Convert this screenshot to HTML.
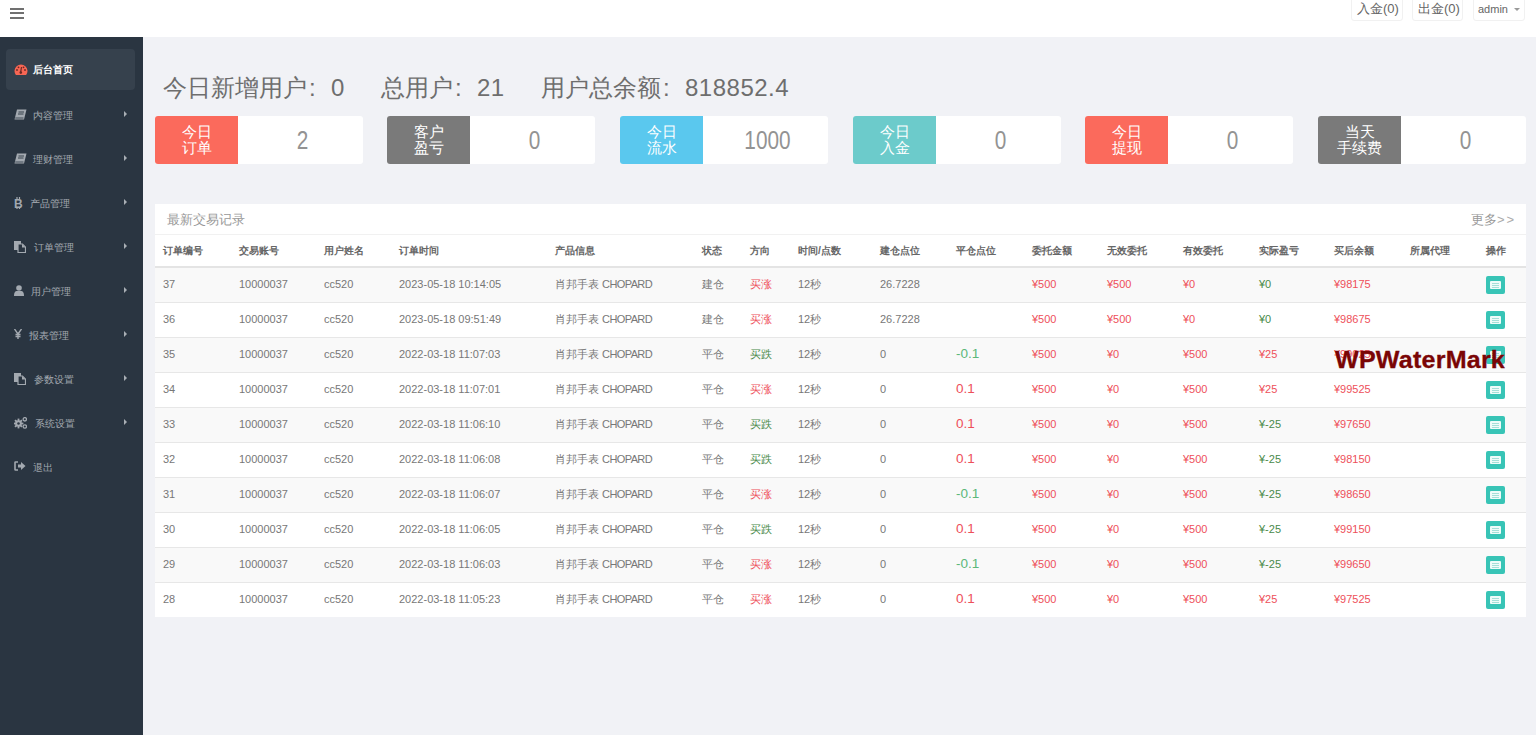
<!DOCTYPE html>
<html><head><meta charset="utf-8">
<style>
*{margin:0;padding:0;box-sizing:border-box}
html,body{width:1536px;height:735px;overflow:hidden;background:#f1f2f6;font-family:"Liberation Sans",sans-serif;position:relative}
.abs{position:absolute}
#top{position:absolute;left:0;top:0;width:1536px;height:37px;background:#fff}
#side{position:absolute;left:0;top:37px;width:143px;height:698px;background:#2a3541}
.burger{position:absolute;left:10px;width:14px;height:2px;background:#707070}
.tbtn{position:absolute;top:-3px;height:24px;border:1px solid #f1f1f1;border-radius:3px;background:#fff;color:#666;font-size:13px;line-height:22px;white-space:nowrap}
.mi{position:absolute;left:0;width:143px;height:44px;color:#9aa0a7;font-size:10px}
.mi .t{position:absolute;left:33px;top:0;line-height:44px}
.mi .ar{position:absolute;left:123px;top:19px;width:0;height:0;border-left:4px solid #9aa0a7;border-top:4px solid transparent;border-bottom:4px solid transparent}
.mi svg{position:absolute}
.title{position:absolute;top:72px;font-size:24px;color:#6e6e6e;line-height:32px;white-space:nowrap}
.col{display:inline-block;width:24px;padding-left:2px}
.dg{letter-spacing:0.5px}
.box{position:absolute;top:116px;width:208px;height:48px;background:#fff;border-radius:3px;overflow:hidden}
.box .lab{position:absolute;left:0;top:0;width:83px;height:48px;color:#fff;font-size:14.5px;line-height:16px;text-align:center;padding-top:8px}
.box .val{position:absolute;left:85px;top:0;width:125px;height:48px;text-align:center;font-size:26px;color:#939393;line-height:48px;transform:scaleX(0.8)}
#card{position:absolute;left:155px;top:204px;width:1371px;height:413px;background:#fff}
.row{position:absolute;left:0;width:1371px;height:35px;border-top:1px solid #e7e7e7}
.row.first{border-top:none}
.row.odd{background:#f9f9f9}
.c{position:absolute;top:-1px;line-height:34px;font-size:11px;color:#777;white-space:nowrap}
.h{position:absolute;top:0;line-height:32px;font-size:10.4px;color:#666;font-weight:bold;white-space:nowrap}
.r{color:#ee4f5a}
.g{color:#4a8a4a}
.gl{color:#5cb87a}
.big{font-size:13.5px}
.btn{position:absolute;left:1331px;top:8px;width:19px;height:18px;background:#38c4b6;border-radius:2px}
.btn i{position:absolute;left:4px;top:5px;width:11px;height:8px;background:#effbf9;border-radius:1px}
.btn i:before{content:"";position:absolute;left:2px;top:2px;width:7px;height:1px;background:#a5dfd8;box-shadow:0 2px 0 #a5dfd8}
.btn i:after{content:"";position:absolute;left:2px;top:6px;width:7px;height:1px;background:#a5dfd8}
#wm{position:absolute;left:1335px;top:347px;font-size:23px;font-weight:bold;color:#7a0505;letter-spacing:0.2px;white-space:nowrap;transform:scaleX(1.09);transform-origin:0 0;-webkit-text-stroke:0.3px #7a0505}
</style></head><body>
<div id="top">
  <div class="burger" style="top:8px"></div>
  <div class="burger" style="top:12px"></div>
  <div class="burger" style="top:17px"></div>
  <div class="tbtn" style="left:1351px;width:52px;padding-left:5px">入金(0)</div>
  <div class="tbtn" style="left:1412px;width:51px;padding-left:5px">出金(0)</div>
  <div class="tbtn" style="left:1473px;width:52px;padding-left:4px;font-size:11px">admin</div>
  <div class="abs" style="left:1514px;top:8px;width:0;height:0;border-top:3px solid #999;border-left:3px solid transparent;border-right:3px solid transparent"></div>
</div>
<div id="side"></div>
<div id="menu"><div class="abs" style="left:6px;top:49px;width:129px;height:41px;background:#36414d;border-radius:4px"></div><svg class="abs" style="left:14px;top:64px" width="14" height="12" viewBox="0 0 14 12"><path d="M1.88,11 A6.5,6.5 0 1 1 12.12,11 Z" fill="#f86654"/><circle cx="3" cy="6" r="0.9" fill="#6b2a24"/><circle cx="4.5" cy="3.3" r="0.9" fill="#6b2a24"/><circle cx="9.5" cy="3.3" r="0.9" fill="#6b2a24"/><circle cx="11" cy="6" r="0.9" fill="#6b2a24"/><path d="M7.5,3 L6.6,8.5" stroke="#6b2a24" stroke-width="1.2"/><circle cx="6.8" cy="8.6" r="1.3" fill="#6b2a24"/></svg><div class="abs" style="left:33px;top:62px;font-size:10px;line-height:16px;color:#fff;font-weight:bold">后台首页</div><svg class="abs" style="left:14px;top:109px" width="13" height="11" viewBox="0 0 13 11"><path d="M3,0.5 L12.5,0.5 L10,10.5 L0.5,10.5 Z" fill="#a3a9b0"/><path d="M4.5,3 L10,3 M4,5 L9.5,5" stroke="#2a3541" stroke-width="0.9"/><path d="M1.2,9 L9.5,9" stroke="#2a3541" stroke-width="0.8"/></svg><div class="abs" style="left:33px;top:108px;font-size:10px;line-height:16px;color:#a2a9b0">内容管理</div><div class="abs" style="left:124px;top:111px;width:0;height:0;border-left:3.5px solid #a9afb5;border-top:3.5px solid transparent;border-bottom:3.5px solid transparent"></div><svg class="abs" style="left:14px;top:153px" width="13" height="11" viewBox="0 0 13 11"><path d="M3,0.5 L12.5,0.5 L10,10.5 L0.5,10.5 Z" fill="#a3a9b0"/><path d="M4.5,3 L10,3 M4,5 L9.5,5" stroke="#2a3541" stroke-width="0.9"/><path d="M1.2,9 L9.5,9" stroke="#2a3541" stroke-width="0.8"/></svg><div class="abs" style="left:33px;top:152px;font-size:10px;line-height:16px;color:#a2a9b0">理财管理</div><div class="abs" style="left:124px;top:155px;width:0;height:0;border-left:3.5px solid #a9afb5;border-top:3.5px solid transparent;border-bottom:3.5px solid transparent"></div><svg class="abs" style="left:14px;top:197px" width="10" height="12" viewBox="0 0 10 12"><text x="0" y="10.5" font-family="Liberation Sans" font-weight="bold" font-size="12" fill="#a3a9b0">B</text><path d="M3,0 V2 M5.5,0 V2 M3,10 V12 M5.5,10 V12" stroke="#a3a9b0" stroke-width="1.2"/></svg><div class="abs" style="left:30px;top:196px;font-size:10px;line-height:16px;color:#a2a9b0">产品管理</div><div class="abs" style="left:124px;top:199px;width:0;height:0;border-left:3.5px solid #a9afb5;border-top:3.5px solid transparent;border-bottom:3.5px solid transparent"></div><svg class="abs" style="left:14px;top:241px" width="12" height="12" viewBox="0 0 12 12"><rect x="0" y="0" width="7" height="9" fill="#a3a9b0"/><path d="M4,3 H8.5 L11.5,6 V11.5 H4 Z" fill="#2a3541" stroke="#a3a9b0" stroke-width="1.2"/><path d="M8,3 V6.5 H11.5" fill="#a3a9b0"/></svg><div class="abs" style="left:34px;top:240px;font-size:10px;line-height:16px;color:#a2a9b0">订单管理</div><div class="abs" style="left:124px;top:243px;width:0;height:0;border-left:3.5px solid #a9afb5;border-top:3.5px solid transparent;border-bottom:3.5px solid transparent"></div><svg class="abs" style="left:14px;top:285px" width="10" height="11" viewBox="0 0 10 11"><circle cx="5" cy="3" r="2.8" fill="#a3a9b0"/><path d="M0,11 C0,7 1.5,6 3,6 L7,6 C8.5,6 10,7 10,11 Z" fill="#a3a9b0"/></svg><div class="abs" style="left:31px;top:284px;font-size:10px;line-height:16px;color:#a2a9b0">用户管理</div><div class="abs" style="left:124px;top:287px;width:0;height:0;border-left:3.5px solid #a9afb5;border-top:3.5px solid transparent;border-bottom:3.5px solid transparent"></div><svg class="abs" style="left:14px;top:329px" width="8" height="10" viewBox="0 0 8 10"><path d="M0.5,0 L4,5 L7.5,0 M4,5 V10 M1.5,5.5 H6.5 M1.5,7.5 H6.5" stroke="#a3a9b0" stroke-width="1.4" fill="none"/></svg><div class="abs" style="left:29px;top:328px;font-size:10px;line-height:16px;color:#a2a9b0">报表管理</div><div class="abs" style="left:124px;top:331px;width:0;height:0;border-left:3.5px solid #a9afb5;border-top:3.5px solid transparent;border-bottom:3.5px solid transparent"></div><svg class="abs" style="left:14px;top:373px" width="12" height="12" viewBox="0 0 12 12"><rect x="0" y="0" width="7" height="9" fill="#a3a9b0"/><path d="M4,3 H8.5 L11.5,6 V11.5 H4 Z" fill="#2a3541" stroke="#a3a9b0" stroke-width="1.2"/><path d="M8,3 V6.5 H11.5" fill="#a3a9b0"/></svg><div class="abs" style="left:34px;top:372px;font-size:10px;line-height:16px;color:#a2a9b0">参数设置</div><div class="abs" style="left:124px;top:375px;width:0;height:0;border-left:3.5px solid #a9afb5;border-top:3.5px solid transparent;border-bottom:3.5px solid transparent"></div><svg class="abs" style="left:14px;top:417px" width="13" height="12" viewBox="0 0 13 12"><g fill="#a3a9b0"><circle cx="4.5" cy="6.5" r="3.3"/><rect x="3.6" y="1.6" width="1.8" height="9.8"/><rect x="-0.4" y="5.6" width="9.8" height="1.8"/><rect x="3.6" y="1.6" width="1.8" height="9.8" transform="rotate(45 4.5 6.5)"/><rect x="3.6" y="1.6" width="1.8" height="9.8" transform="rotate(-45 4.5 6.5)"/></g><circle cx="4.5" cy="6.5" r="1.3" fill="#2a3541"/><circle cx="10.8" cy="2.3" r="1.7" fill="none" stroke="#a3a9b0" stroke-width="1.3"/><circle cx="10.8" cy="9.5" r="1.7" fill="none" stroke="#a3a9b0" stroke-width="1.3"/></svg><div class="abs" style="left:35px;top:416px;font-size:10px;line-height:16px;color:#a2a9b0">系统设置</div><div class="abs" style="left:124px;top:419px;width:0;height:0;border-left:3.5px solid #a9afb5;border-top:3.5px solid transparent;border-bottom:3.5px solid transparent"></div><svg class="abs" style="left:14px;top:461px" width="12" height="10" viewBox="0 0 12 10"><path d="M4,1 H1.5 Q1,1 1,1.5 V8.5 Q1,9 1.5,9 H4" stroke="#a3a9b0" stroke-width="1.6" fill="none"/><path d="M4,3.5 H7 V1 L11.5,5 L7,9 V6.5 H4 Z" fill="#a3a9b0"/></svg><div class="abs" style="left:33px;top:460px;font-size:10px;line-height:16px;color:#a2a9b0">退出</div></div>
<div class="title" style="left:163px">今日新增用户<span class="col">:</span><span class="dg">0</span></div>
<div class="title" style="left:381px">总用户<span class="col">:</span><span class="dg">21</span></div>
<div class="title" style="left:541px">用户总余额<span class="col">:</span><span class="dg">818852.4</span></div>

<div class="box" style="left:155px"><div class="lab" style="background:#fb6a5c">今日<br>订单</div><div class="val">2</div></div>
<div class="box" style="left:387px"><div class="lab" style="background:#7a7a7a">客户<br>盈亏</div><div class="val">0</div></div>
<div class="box" style="left:620px"><div class="lab" style="background:#5ac8ee">今日<br>流水</div><div class="val">1000</div></div>
<div class="box" style="left:853px"><div class="lab" style="background:#6ccbcb">今日<br>入金</div><div class="val">0</div></div>
<div class="box" style="left:1085px"><div class="lab" style="background:#fb6a5c">今日<br>提现</div><div class="val">0</div></div>
<div class="box" style="left:1318px"><div class="lab" style="background:#7a7a7a">当天<br>手续费</div><div class="val">0</div></div>

<div id="card">
  <div class="abs" style="left:12px;top:0;line-height:31px;font-size:13px;color:#999">最新交易记录</div>
  <div class="abs" style="left:1316px;top:0;line-height:31px;font-size:13px;color:#999">更多<span style="letter-spacing:2px;color:#aaa">&gt;&gt;</span></div>
  <div id="thead" class="abs" style="left:0;top:30px;width:1371px;height:34px;border-top:1px solid #f1f1f1;border-bottom:2px solid #e4e4e4"><span class="h" style="left:8px">订单编号</span><span class="h" style="left:84px">交易账号</span><span class="h" style="left:169px">用户姓名</span><span class="h" style="left:244px">订单时间</span><span class="h" style="left:400px">产品信息</span><span class="h" style="left:547px">状态</span><span class="h" style="left:595px">方向</span><span class="h" style="left:643px">时间/点数</span><span class="h" style="left:725px">建仓点位</span><span class="h" style="left:801px">平仓点位</span><span class="h" style="left:877px">委托金额</span><span class="h" style="left:952px">无效委托</span><span class="h" style="left:1028px">有效委托</span><span class="h" style="left:1104px">实际盈亏</span><span class="h" style="left:1179px">买后余额</span><span class="h" style="left:1255px">所属代理</span><span class="h" style="left:1331px">操作</span></div>
  <div class="row odd first" style="top:64px;height:34px;padding-top:0"><span class="c " style="left:8px">37</span><span class="c " style="left:84px">10000037</span><span class="c " style="left:169px">cc520</span><span class="c " style="left:244px">2023-05-18 10:14:05</span><span class="c " style="left:400px">肖邦手表 <span style="letter-spacing:-0.6px">CHOPARD</span></span><span class="c " style="left:547px">建仓</span><span class="c r" style="left:595px">买涨</span><span class="c " style="left:643px">12秒</span><span class="c " style="left:725px">26.7228</span><span class="c r" style="left:877px">¥500</span><span class="c r" style="left:952px">¥500</span><span class="c r" style="left:1028px">¥0</span><span class="c g" style="left:1104px">¥0</span><span class="c r" style="left:1179px">¥98175</span><span class="btn"><i></i></span></div>
<div class="row" style="top:98px"><span class="c " style="left:8px">36</span><span class="c " style="left:84px">10000037</span><span class="c " style="left:169px">cc520</span><span class="c " style="left:244px">2023-05-18 09:51:49</span><span class="c " style="left:400px">肖邦手表 <span style="letter-spacing:-0.6px">CHOPARD</span></span><span class="c " style="left:547px">建仓</span><span class="c r" style="left:595px">买涨</span><span class="c " style="left:643px">12秒</span><span class="c " style="left:725px">26.7228</span><span class="c r" style="left:877px">¥500</span><span class="c r" style="left:952px">¥500</span><span class="c r" style="left:1028px">¥0</span><span class="c g" style="left:1104px">¥0</span><span class="c r" style="left:1179px">¥98675</span><span class="btn"><i></i></span></div>
<div class="row odd" style="top:133px"><span class="c " style="left:8px">35</span><span class="c " style="left:84px">10000037</span><span class="c " style="left:169px">cc520</span><span class="c " style="left:244px">2022-03-18 11:07:03</span><span class="c " style="left:400px">肖邦手表 <span style="letter-spacing:-0.6px">CHOPARD</span></span><span class="c " style="left:547px">平仓</span><span class="c g" style="left:595px">买跌</span><span class="c " style="left:643px">12秒</span><span class="c " style="left:725px">0</span><span class="c gl big" style="left:801px">-0.1</span><span class="c r" style="left:877px">¥500</span><span class="c r" style="left:952px">¥0</span><span class="c r" style="left:1028px">¥500</span><span class="c r" style="left:1104px">¥25</span><span class="c r" style="left:1179px">¥99025</span><span class="btn"><i></i></span></div>
<div class="row" style="top:168px"><span class="c " style="left:8px">34</span><span class="c " style="left:84px">10000037</span><span class="c " style="left:169px">cc520</span><span class="c " style="left:244px">2022-03-18 11:07:01</span><span class="c " style="left:400px">肖邦手表 <span style="letter-spacing:-0.6px">CHOPARD</span></span><span class="c " style="left:547px">平仓</span><span class="c r" style="left:595px">买涨</span><span class="c " style="left:643px">12秒</span><span class="c " style="left:725px">0</span><span class="c r big" style="left:801px">0.1</span><span class="c r" style="left:877px">¥500</span><span class="c r" style="left:952px">¥0</span><span class="c r" style="left:1028px">¥500</span><span class="c r" style="left:1104px">¥25</span><span class="c r" style="left:1179px">¥99525</span><span class="btn"><i></i></span></div>
<div class="row odd" style="top:203px"><span class="c " style="left:8px">33</span><span class="c " style="left:84px">10000037</span><span class="c " style="left:169px">cc520</span><span class="c " style="left:244px">2022-03-18 11:06:10</span><span class="c " style="left:400px">肖邦手表 <span style="letter-spacing:-0.6px">CHOPARD</span></span><span class="c " style="left:547px">平仓</span><span class="c g" style="left:595px">买跌</span><span class="c " style="left:643px">12秒</span><span class="c " style="left:725px">0</span><span class="c r big" style="left:801px">0.1</span><span class="c r" style="left:877px">¥500</span><span class="c r" style="left:952px">¥0</span><span class="c r" style="left:1028px">¥500</span><span class="c g" style="left:1104px">¥-25</span><span class="c r" style="left:1179px">¥97650</span><span class="btn"><i></i></span></div>
<div class="row" style="top:238px"><span class="c " style="left:8px">32</span><span class="c " style="left:84px">10000037</span><span class="c " style="left:169px">cc520</span><span class="c " style="left:244px">2022-03-18 11:06:08</span><span class="c " style="left:400px">肖邦手表 <span style="letter-spacing:-0.6px">CHOPARD</span></span><span class="c " style="left:547px">平仓</span><span class="c g" style="left:595px">买跌</span><span class="c " style="left:643px">12秒</span><span class="c " style="left:725px">0</span><span class="c r big" style="left:801px">0.1</span><span class="c r" style="left:877px">¥500</span><span class="c r" style="left:952px">¥0</span><span class="c r" style="left:1028px">¥500</span><span class="c g" style="left:1104px">¥-25</span><span class="c r" style="left:1179px">¥98150</span><span class="btn"><i></i></span></div>
<div class="row odd" style="top:273px"><span class="c " style="left:8px">31</span><span class="c " style="left:84px">10000037</span><span class="c " style="left:169px">cc520</span><span class="c " style="left:244px">2022-03-18 11:06:07</span><span class="c " style="left:400px">肖邦手表 <span style="letter-spacing:-0.6px">CHOPARD</span></span><span class="c " style="left:547px">平仓</span><span class="c r" style="left:595px">买涨</span><span class="c " style="left:643px">12秒</span><span class="c " style="left:725px">0</span><span class="c gl big" style="left:801px">-0.1</span><span class="c r" style="left:877px">¥500</span><span class="c r" style="left:952px">¥0</span><span class="c r" style="left:1028px">¥500</span><span class="c g" style="left:1104px">¥-25</span><span class="c r" style="left:1179px">¥98650</span><span class="btn"><i></i></span></div>
<div class="row" style="top:308px"><span class="c " style="left:8px">30</span><span class="c " style="left:84px">10000037</span><span class="c " style="left:169px">cc520</span><span class="c " style="left:244px">2022-03-18 11:06:05</span><span class="c " style="left:400px">肖邦手表 <span style="letter-spacing:-0.6px">CHOPARD</span></span><span class="c " style="left:547px">平仓</span><span class="c g" style="left:595px">买跌</span><span class="c " style="left:643px">12秒</span><span class="c " style="left:725px">0</span><span class="c r big" style="left:801px">0.1</span><span class="c r" style="left:877px">¥500</span><span class="c r" style="left:952px">¥0</span><span class="c r" style="left:1028px">¥500</span><span class="c g" style="left:1104px">¥-25</span><span class="c r" style="left:1179px">¥99150</span><span class="btn"><i></i></span></div>
<div class="row odd" style="top:343px"><span class="c " style="left:8px">29</span><span class="c " style="left:84px">10000037</span><span class="c " style="left:169px">cc520</span><span class="c " style="left:244px">2022-03-18 11:06:03</span><span class="c " style="left:400px">肖邦手表 <span style="letter-spacing:-0.6px">CHOPARD</span></span><span class="c " style="left:547px">平仓</span><span class="c r" style="left:595px">买涨</span><span class="c " style="left:643px">12秒</span><span class="c " style="left:725px">0</span><span class="c gl big" style="left:801px">-0.1</span><span class="c r" style="left:877px">¥500</span><span class="c r" style="left:952px">¥0</span><span class="c r" style="left:1028px">¥500</span><span class="c g" style="left:1104px">¥-25</span><span class="c r" style="left:1179px">¥99650</span><span class="btn"><i></i></span></div>
<div class="row" style="top:378px"><span class="c " style="left:8px">28</span><span class="c " style="left:84px">10000037</span><span class="c " style="left:169px">cc520</span><span class="c " style="left:244px">2022-03-18 11:05:23</span><span class="c " style="left:400px">肖邦手表 <span style="letter-spacing:-0.6px">CHOPARD</span></span><span class="c " style="left:547px">平仓</span><span class="c r" style="left:595px">买涨</span><span class="c " style="left:643px">12秒</span><span class="c " style="left:725px">0</span><span class="c r big" style="left:801px">0.1</span><span class="c r" style="left:877px">¥500</span><span class="c r" style="left:952px">¥0</span><span class="c r" style="left:1028px">¥500</span><span class="c r" style="left:1104px">¥25</span><span class="c r" style="left:1179px">¥97525</span><span class="btn"><i></i></span></div>
</div>
<div id="wm">WPWaterMark</div>
</body></html>
